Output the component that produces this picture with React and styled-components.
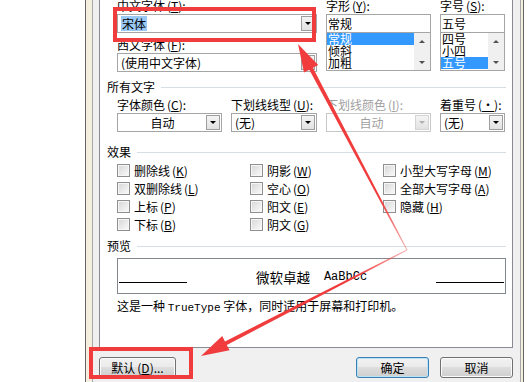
import styled, { createGlobalStyle } from "styled-components";

const GlobalStyle = createGlobalStyle`
  html, body { margin: 0; padding: 0; background: #fff; }
  body {
    font-family: "Noto Sans CJK SC", "Liberation Sans", sans-serif;
    font-size: 12px;
    color: #000;
  }
`;

const Page = styled.div`
  position: relative;
  width: 532px;
  height: 382px;
  overflow: hidden;
  display: flex;
  background: #fff;
`;

const Gutter = styled.div`
  width: 85px;
  flex: none;
`;

const Frame = styled.div`
  display: flex;
  flex: none;
  width: 439px;
  box-sizing: border-box;
  border-left: 1px solid #646464;
  border-right: 1px solid #646464;
  background: #f5f0de;
  padding: 0 2px 0 6px;
`;

const Dialog = styled.div`
  flex: 1;
  display: flex;
  flex-direction: column;
  border-left: 1px solid #a8a8a8;
  border-right: 1px solid #a8a8a8;
  background: #f0f0f0;
  padding: 0 7px 0 6px;
`;

const Panel = styled.div`
  box-sizing: border-box;
  height: 350px;
  margin-top: -2px;
  border: 1px solid #898c95;
  background: #fff;
  padding: 1px 6px 0 7px;
`;

const TopGrid = styled.div`
  display: grid;
  grid-template-columns: 200px 105px 65px;
  column-gap: 9px;
  margin-left: 10px;
`;

const RowGrid = styled.div`
  display: grid;
  grid-template-columns: 105px 86px 105px 65px;
  column-gap: 9px;
  margin-left: 10px;
  margin-top: 6px;
`;

const Field = styled.div`
  display: flex;
  flex-direction: column;
`;

const Label = styled.div`
  height: 12px;
  line-height: 12px;
  margin: ${(p) => (p.$gap ? "6px" : "0")} 0 2px;
  white-space: nowrap;
  color: ${(p) => (p.$disabled ? "#a0a0a0" : "#000")};
`;

const Key = styled.span`
  margin-left: 2px;
  u { text-decoration: underline; }
`;

const Combo = styled.div`
  box-sizing: border-box;
  height: 19px;
  display: flex;
  align-items: center;
  border: 1px solid ${(p) => (p.$disabled ? "#c8c8c8" : "#a5a5a5")};
  background: #fff;
  padding: 1px;
`;

const ComboText = styled.div`
  flex: 1;
  line-height: 15px;
  padding-left: ${(p) => (p.$center ? "0" : "2px")};
  text-align: ${(p) => (p.$center ? "center" : "left")};
  color: ${(p) => (p.$disabled ? "#a0a0a0" : "#000")};
  white-space: nowrap;
  overflow: hidden;
`;

const Selected = styled.span`
  background: #99c9f4;
  padding: 0 1px;
`;

const DropButton = styled.div`
  box-sizing: border-box;
  width: 14px;
  height: 15px;
  display: flex;
  align-items: center;
  justify-content: center;
  background: linear-gradient(#f4f4f4, #e2e2e2);
  border: 1px solid ${(p) => (p.$disabled ? "#d4d4d4" : "#9e9e9e")};

  &::after {
    content: "";
    border-left: 3px solid transparent;
    border-right: 3px solid transparent;
    border-top: 3px solid ${(p) => (p.$disabled ? "#b0b0b0" : "#000")};
  }
`;

const Input = styled.div`
  box-sizing: border-box;
  height: 19px;
  border: 1px solid #a5a5a5;
  padding-left: 1px;
  line-height: 17px;
`;

const ListBox = styled.div`
  box-sizing: border-box;
  height: 38px;
  display: flex;
  border: 1px solid #a5a5a5;
  border-top: none;
`;

const Items = styled.div`
  flex: 1;
  display: flex;
  flex-direction: column;
`;

const Item = styled.div`
  height: 12px;
  line-height: 12px;
  padding-left: 1px;
  background: ${(p) => (p.$active ? "#3399ff" : "transparent")};
  color: ${(p) => (p.$active ? "#fff" : "#000")};
`;

const ScrollBar = styled.div`
  width: 16px;
  display: flex;
  flex-direction: column;
  justify-content: space-between;
  align-items: center;
  background: #f0f0f0;
  padding: 7px 0 6px;
  box-sizing: border-box;
`;

const Tri = styled.span`
  border-left: 3px solid transparent;
  border-right: 3px solid transparent;
  ${(p) => (p.$up ? "border-bottom" : "border-top")}: 3px solid #505050;
`;

const Section = styled.div`
  display: flex;
  align-items: center;
  gap: 6px;
  height: 12px;
  line-height: 12px;
  margin-top: ${(p) => p.$top}px;
  white-space: nowrap;

  &::after {
    content: "";
    flex: 1;
    height: 1px;
    background: #d5dfe5;
  }
`;

const Checks = styled.div`
  display: grid;
  grid-template-columns: 133px 133px auto;
  grid-template-rows: repeat(4, 18px);
  grid-auto-flow: column;
  margin: 3px 0 0 10px;
`;

const CheckItem = styled.div`
  display: flex;
  align-items: center;
  gap: 4px;
  white-space: nowrap;
`;

const Box = styled.span`
  box-sizing: border-box;
  width: 13px;
  height: 13px;
  border: 1px solid #8e8f8f;
  box-shadow: inset 0 0 0 1px #f6f6f6;
  background: linear-gradient(135deg, #d6d6d6, #fbfbfb);
`;

const Preview = styled.div`
  box-sizing: border-box;
  height: 36px;
  width: 389px;
  margin: 6px 0 0 10px;
  border: 1px solid #828790;
  display: flex;
  align-items: center;
  justify-content: space-between;
  padding: 0 1px;
`;

const Rule = styled.span`
  width: 68px;
  height: 1px;
  margin-top: 12px;
  background: #000;
`;

const Sample = styled.div`
  display: flex;
  align-items: center;
  gap: 14px;
  font-size: 13.5px;
  margin-top: 2px;
`;

const Mono = styled.span`
  font-family: "Liberation Mono", monospace;
  font-size: ${(p) => p.$size || 11}px;
`;

const Note = styled.div`
  margin: 6px 0 0 10px;
  line-height: 12px;
  white-space: nowrap;
`;

const Buttons = styled.div`
  display: flex;
  margin-top: 9px;
  gap: 11px;
`;

const Button = styled.div`
  box-sizing: border-box;
  width: ${(p) => p.$w}px;
  height: 21px;
  margin-left: ${(p) => (p.$push ? "auto" : "0")};
  border: 1px solid ${(p) => (p.$default ? "#3c7fb1" : "#707070")};
  border-radius: 3px;
  background: linear-gradient(#f2f2f2 0%, #ebebeb 45%, #dddddd 50%, #cfcfcf 100%);
  box-shadow: inset 0 0 0 1px ${(p) => (p.$default ? "#b8e3f9" : "#fbfbfb")};
  text-align: center;
  line-height: 19px;
  white-space: nowrap;
`;

const Overlay = styled.svg`
  position: absolute;
  left: 0;
  top: 0;
  pointer-events: none;
`;

const k = (c) => (
  <Key>
    (<u>{c}</u>)
  </Key>
);

const checks = [
  ["删除线", "K"],
  ["双删除线", "L"],
  ["上标", "P"],
  ["下标", "B"],
  ["阴影", "W"],
  ["空心", "O"],
  ["阳文", "E"],
  ["阴文", "G"],
  ["小型大写字母", "M"],
  ["全部大写字母", "A"],
  ["隐藏", "H"],
];

const ListField = ({ label, value, items, active }) => (
  <Field>
    <Label>{label}</Label>
    <Input>{value}</Input>
    <ListBox>
      <Items>
        {items.map((it) => (
          <Item key={it} $active={it === active}>
            {it}
          </Item>
        ))}
      </Items>
      <ScrollBar>
        <Tri $up />
        <Tri />
      </ScrollBar>
    </ListBox>
  </Field>
);

const Select = ({ children, center, disabled, selected }) => (
  <Combo $disabled={disabled}>
    <ComboText $center={center} $disabled={disabled}>
      {selected ? <Selected>{children}</Selected> : children}
    </ComboText>
    <DropButton $disabled={disabled} />
  </Combo>
);

const App = () => {
  return (
    <>
      <GlobalStyle />
      <Page>
        <Gutter />
        <Frame>
          <Dialog>
            <Panel>
              <TopGrid>
                <Field>
                  <Label>中文字体{k("T")}:</Label>
                  <Select selected>宋体</Select>
                  <Label $gap>西文字体{k("F")}:</Label>
                  <Select>(使用中文字体)</Select>
                </Field>
                <ListField label={<>字形{k("Y")}:</>} value="常规" items={["常规", "倾斜", "加粗"]} active="常规" />
                <ListField label={<>字号{k("S")}:</>} value="五号" items={["四号", "小四", "五号"]} active="五号" />
              </TopGrid>

              <Section $top={9}>所有文字</Section>
              <RowGrid>
                <Field>
                  <Label>字体颜色{k("C")}:</Label>
                  <Select center>自动</Select>
                </Field>
                <Field>
                  <Label>下划线线型{k("U")}:</Label>
                  <Select>(无)</Select>
                </Field>
                <Field>
                  <Label $disabled>下划线颜色{k("I")}:</Label>
                  <Select center disabled>自动</Select>
                </Field>
                <Field>
                  <Label>着重号{k("·")}:</Label>
                  <Select>(无)</Select>
                </Field>
              </RowGrid>

              <Section $top={14}>效果</Section>
              <Checks>
                {checks.map(([name, c]) => (
                  <CheckItem key={name}>
                    <Box />
                    <span>
                      {name}
                      {k(c)}
                    </span>
                  </CheckItem>
                ))}
              </Checks>

              <Section $top={7}>预览</Section>
              <Preview>
                <Rule />
                <Sample>
                  <span>微软卓越</span>
                  <Mono $size={12}>AaBbCc</Mono>
                </Sample>
                <Rule />
              </Preview>
              <Note>
                这是一种 <Mono $size={11}>TrueType</Mono> 字体，同时适用于屏幕和打印机。
              </Note>
            </Panel>

            <Buttons>
              <Button $w={77}>默认{k("D")}...</Button>
              <Button $w={73} $push $default>确定</Button>
              <Button $w={73}>取消</Button>
            </Buttons>
          </Dialog>
        </Frame>

        <Overlay width="532" height="382" viewBox="0 0 532 382">
          <defs>
            <linearGradient id="fadeA" gradientUnits="userSpaceOnUse" x1="407" y1="250" x2="298" y2="44">
              <stop offset="0" stopColor="#f03c3c" stopOpacity="0.35" />
              <stop offset="0.25" stopColor="#f03c3c" stopOpacity="1" />
            </linearGradient>
            <linearGradient id="fadeB" gradientUnits="userSpaceOnUse" x1="407" y1="250" x2="201" y2="356">
              <stop offset="0" stopColor="#f03c3c" stopOpacity="0.35" />
              <stop offset="0.25" stopColor="#f03c3c" stopOpacity="1" />
            </linearGradient>
          </defs>
          <rect x="115" y="9" width="199" height="31" fill="none" stroke="#f03c3c" strokeWidth="4" />
          <rect x="91" y="349" width="100" height="28" fill="none" stroke="#f03c3c" strokeWidth="4" />
          <polygon
            fill="url(#fadeA)"
            points="407.5,249.7 312.9,67.8 318.2,65 298,44 304,72.5 309.3,69.7 406.5,250.3"
          />
          <polygon
            fill="url(#fadeB)"
            points="407.3,250.5 226.8,345 229.6,350.3 201,356 222.2,336.1 225,341.4 406.7,249.5"
          />
        </Overlay>
      </Page>
    </>
  );
};

export default App;
